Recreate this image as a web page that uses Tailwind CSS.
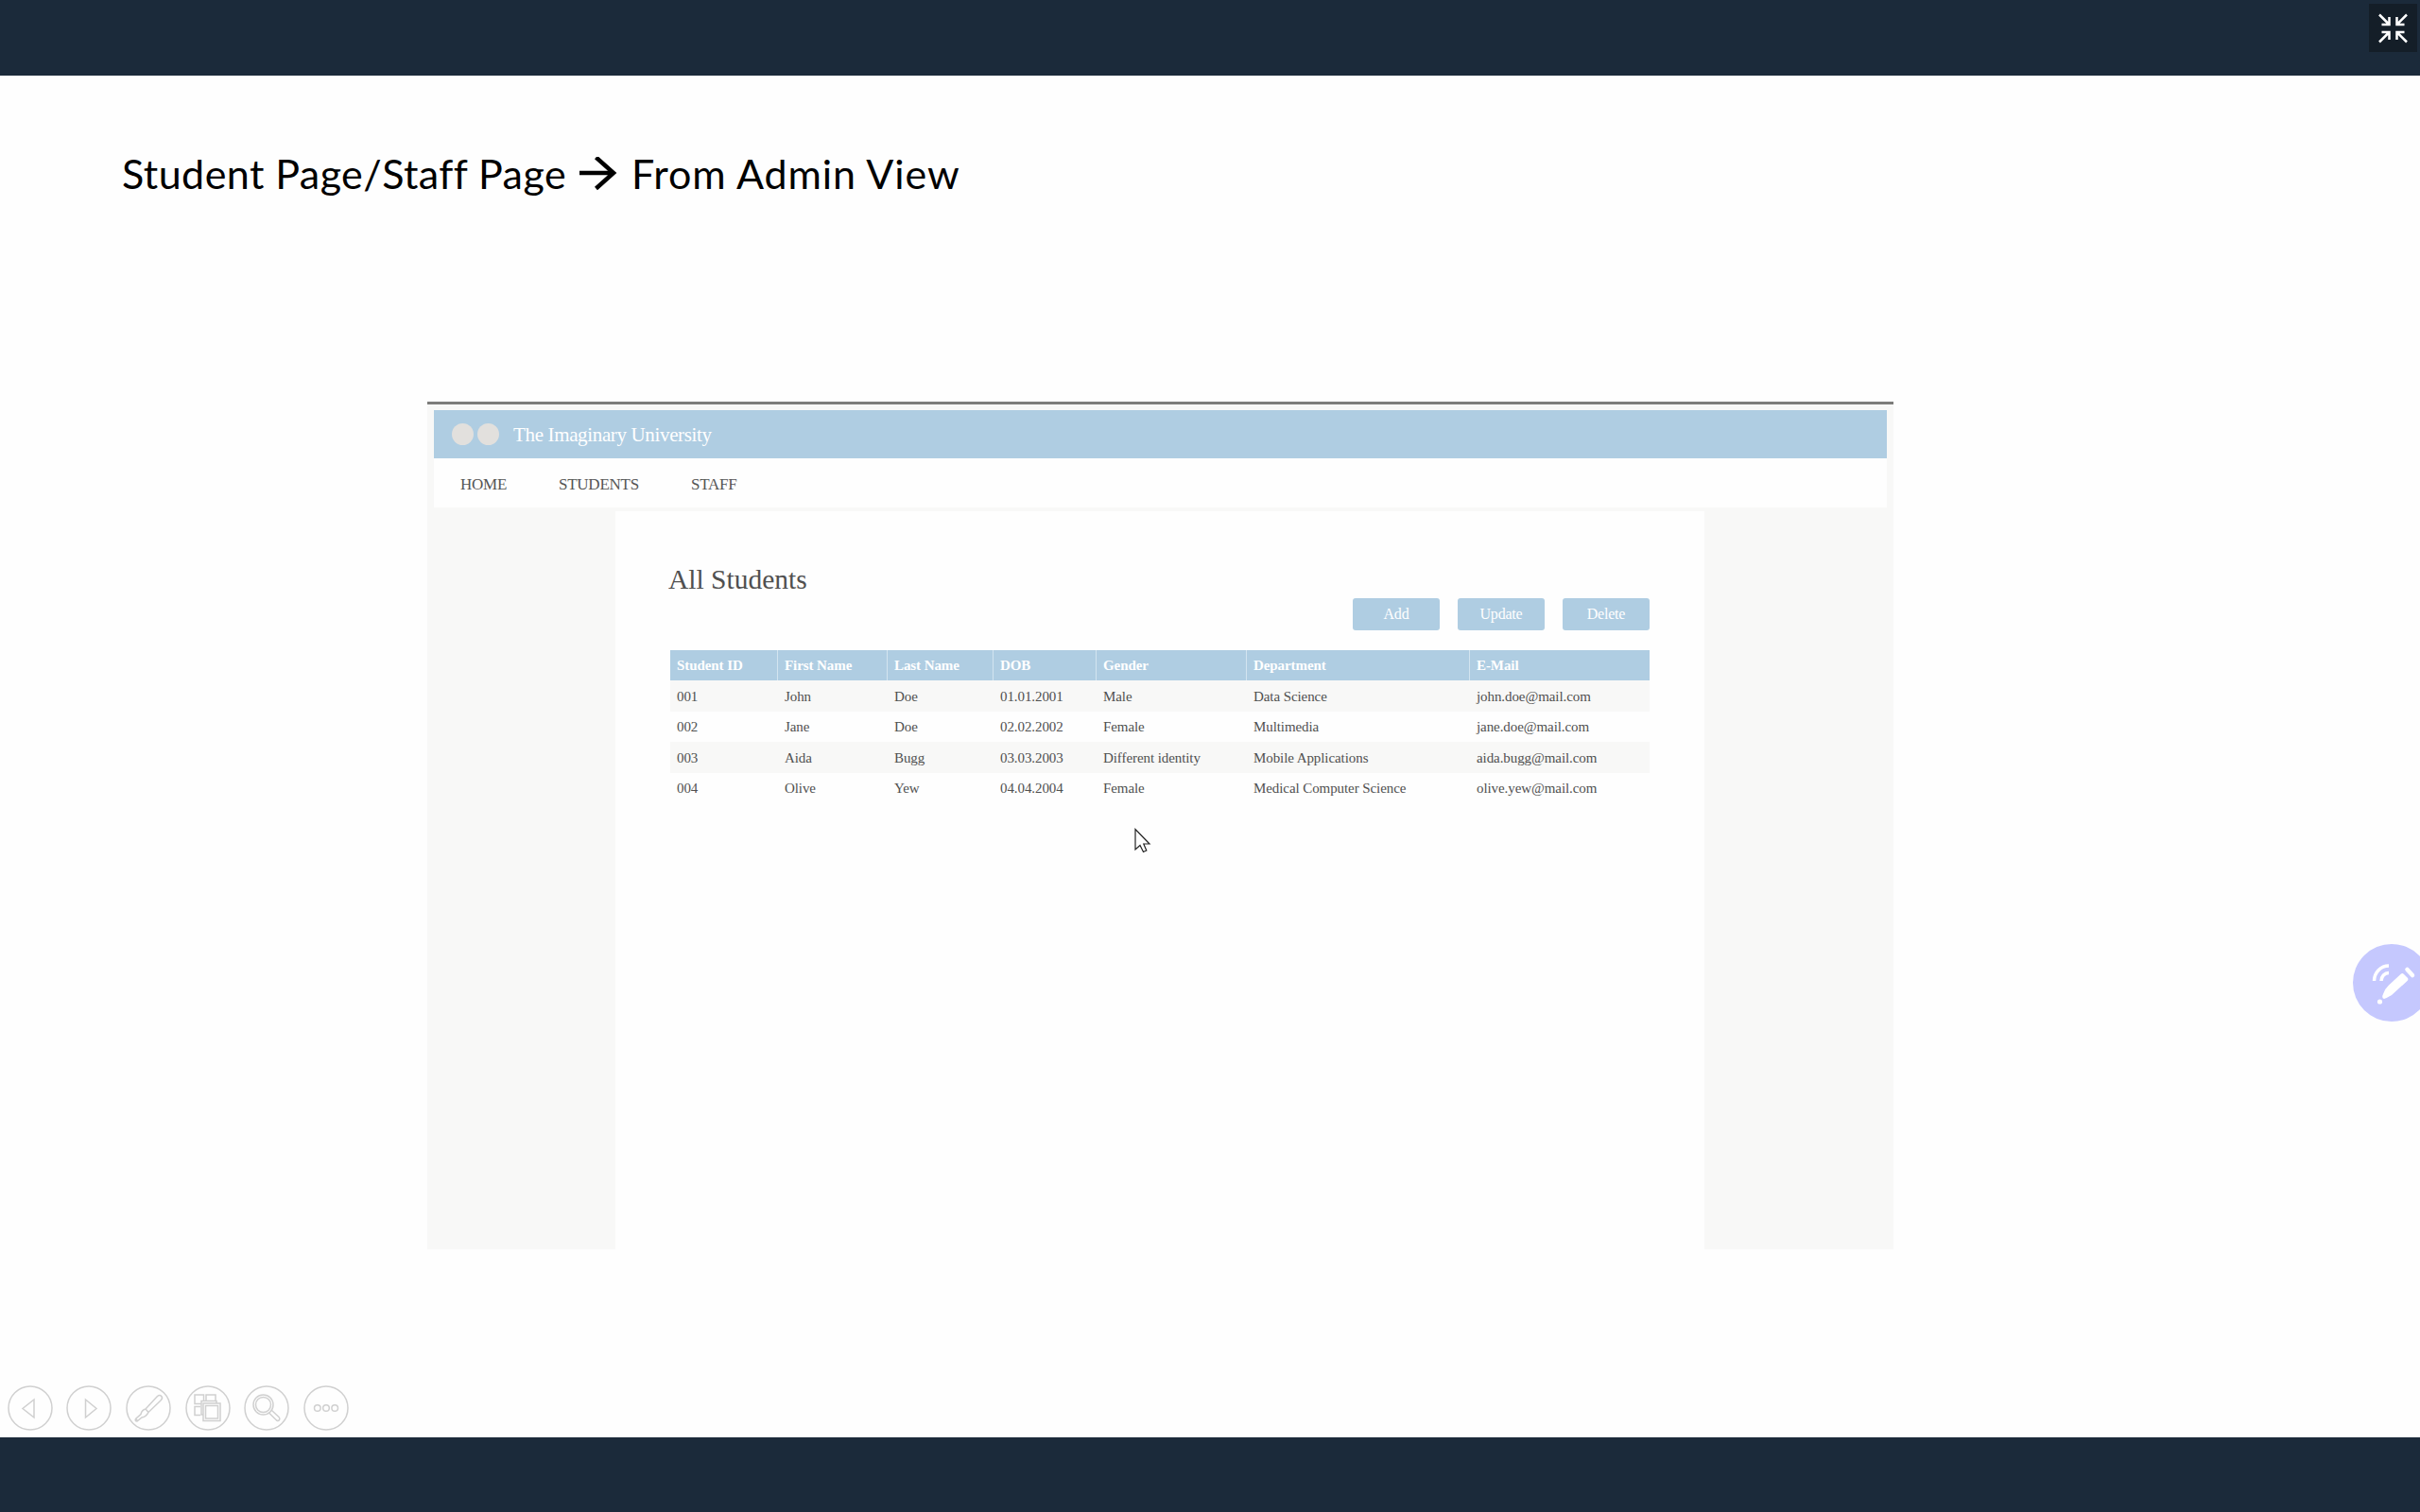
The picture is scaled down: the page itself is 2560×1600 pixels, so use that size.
<!DOCTYPE html>
<html lang="en">
<head>
<meta charset="utf-8">
<title>Student Page/Staff Page</title>
<script src="https://cdn.jsdelivr.net/npm/@tailwindcss/browser@4"></script>
</head>
<body class="relative flex h-[1600px] w-[2560px] flex-col overflow-hidden bg-[#fefefe] text-[#555]">
  <header class="flex h-20 shrink-0 justify-end bg-[#1b2a3a] pt-1 pr-[3px]">
    <button class="flex size-[51px] items-center justify-center bg-[#141e28]" aria-label="Exit full screen">
      <svg class="size-[51px]" viewBox="0 0 51 51" fill="none" stroke="#fff" stroke-width="2.5"><path d="M11 11.500L21 21.500M13.500 22H21.500V14M40 11.500L30 21.500M37.500 22H29.500V14M11 40.500L21 30.500M13.500 30H21.500V38M40 40.500L30 30.500M37.500 30H29.500V38"/></svg>
    </button>
  </header>

  <main class="flex h-[1441px] shrink-0 flex-col">
    <h1 class="flex h-[345px] items-start pt-[74px] pl-[129px] font-['Lato',sans-serif] text-[43px] leading-[60px] whitespace-nowrap text-black">
      <span class="w-[470px] tracking-[0.45px]">Student Page/Staff Page</span>
      <svg class="mt-[12px] ml-[13px] h-9 w-11" viewBox="0 0 44 36" fill="none" stroke="#000" stroke-width="4.500"><path d="M1 17H38M18.500 0.500L37 17L18.500 33.500"/></svg>
      <span class="ml-[12px] tracking-[0.9px]">From Admin View</span>
    </h1>

    <section class="ml-[452px] flex h-[897px] w-[1551px] flex-col border-t-[3px] border-[#7c7c7a] bg-[#f8f8f7] font-['Liberation_Serif',serif]">
      <div class="mx-[7px] mt-1.5 flex h-[51px] shrink-0 items-center bg-[#afcde2] pl-[19px]">
        <span class="size-[23px] rounded-full bg-[#e2e0dd]"></span>
        <span class="ml-1 size-[23px] rounded-full bg-[#e2e0dd]"></span>
        <span class="ml-[15px] text-[21px] leading-[50px] tracking-[-0.35px] text-white">The Imaginary University</span>
      </div>
      <nav class="mx-[7px] flex h-[52px] shrink-0 bg-[#fefefe] pl-7 text-[17px] leading-[56px] tracking-[-0.25px] text-[#555]">
        <a class="w-[104px]">HOME</a><a class="w-[140px]">STUDENTS</a><a>STAFF</a>
      </nav>
      <div class="mt-1 ml-[199px] flex h-[781px] w-[1152px] flex-col bg-[#fefefe] pr-[58px] pl-14">
        <h2 class="mt-[54px] text-[29.500px] leading-9 text-[#505050]">All Students</h2>
        <div class="mt-0.5 flex justify-end gap-[19px] text-base leading-[34px] tracking-[-0.2px] text-white">
          <button class="h-[34px] w-[92px] rounded-[3px] bg-[#afcde2]">Add</button>
          <button class="h-[34px] w-[92px] rounded-[3px] bg-[#afcde2]">Update</button>
          <button class="h-[34px] w-[92px] rounded-[3px] bg-[#afcde2]">Delete</button>
        </div>
        <table class="mt-[21px] ml-[2px] w-[1036px] table-fixed border-separate border-spacing-0 text-left text-[15px] leading-8 tracking-[-0.08px] text-[#505050]">
          <colgroup><col class="w-[114px]"><col class="w-[116px]"><col class="w-[112px]"><col class="w-[109px]"><col class="w-[159px]"><col class="w-[236px]"><col class="w-[190px]"></colgroup>
          <thead class="bg-[#afcde2] text-white">
            <tr class="h-8 *:border-r *:border-[#d3e4f0] *:p-0 *:pl-[7px] *:last:border-r-0"><th>Student ID</th><th>First Name</th><th>Last Name</th><th>DOB</th><th>Gender</th><th>Department</th><th>E-Mail</th></tr>
          </thead>
          <tbody>
            <tr class="h-[33px] bg-[#f8f8f7] *:p-0 *:pl-[7px]"><td>001</td><td>John</td><td>Doe</td><td>01.01.2001</td><td>Male</td><td>Data Science</td><td>john.doe@mail.com</td></tr>
            <tr class="h-8 *:p-0 *:pl-[7px]"><td>002</td><td>Jane</td><td>Doe</td><td>02.02.2002</td><td>Female</td><td>Multimedia</td><td>jane.doe@mail.com</td></tr>
            <tr class="h-[33px] bg-[#f8f8f7] *:p-0 *:pl-[7px]"><td>003</td><td>Aida</td><td>Bugg</td><td>03.03.2003</td><td>Different identity</td><td>Mobile Applications</td><td>aida.bugg@mail.com</td></tr>
            <tr class="h-8 *:p-0 *:pl-[7px]"><td>004</td><td>Olive</td><td>Yew</td><td>04.04.2004</td><td>Female</td><td>Medical Computer Science</td><td>olive.yew@mail.com</td></tr>
          </tbody>
        </table>
      </div>
    </section>

    <div class="mt-[143.500px] flex gap-[14.700px] pl-[7.500px]">
      <svg class="size-12" viewBox="0 0 48 48" fill="none" stroke="#d0d0d0" stroke-width="1.500"><circle cx="24" cy="24" r="23"/><path d="M28 15V34L16 24.500Z"/></svg>
      <svg class="size-12" viewBox="0 0 48 48" fill="none" stroke="#d0d0d0" stroke-width="1.500"><circle cx="24" cy="24" r="23"/><path d="M20.500 15V34L32 24.500Z"/></svg>
      <svg class="size-12" viewBox="0 0 48 48" fill="none" stroke="#d0d0d0" stroke-width="1.500"><circle cx="24" cy="24" r="23"/><path d="M21 25L33.500 11.500Q36 9.500 37.800 11.500T37 16L24 28.500ZM21 25L24 28.500Q22 33 17 34L12 38Q9.500 38 10.500 35.500L16 30.500Q17 26 21 25ZM10.500 35.500L13 37.500"/></svg>
      <svg class="size-12" viewBox="0 0 48 48" fill="none" stroke="#d0d0d0" stroke-width="1.500"><circle cx="24" cy="24" r="23"/><path d="M17 19.500H10V10H19.500V16.500M22 16V10H32V16M16 31.500H10V22.500H16"/><path d="M19 31H17V16.500H33V19M19 19H37V37.500H19Z"/><path d="M21.500 21.500H34.500V35H21.500Z"/></svg>
      <svg class="size-12" viewBox="0 0 48 48" fill="none" stroke="#d0d0d0" stroke-width="1.500"><circle cx="24" cy="24" r="23"/><circle cx="20.500" cy="20.500" r="10.500"/><circle cx="20.500" cy="20.500" r="8"/><path d="M26.500 29L34.500 37Q36.500 38 37.500 36.500T37 33.500L29 26"/></svg>
      <svg class="size-12" viewBox="0 0 48 48" fill="none" stroke="#d0d0d0" stroke-width="1.500"><circle cx="24" cy="24" r="23"/><circle cx="14.800" cy="24" r="3.300"/><circle cx="24" cy="24" r="3.300"/><circle cx="33.200" cy="24" r="3.300"/></svg>
    </div>
  </main>
  <footer class="h-[79px] shrink-0 bg-[#1b2a3a]"></footer>

  <svg class="absolute top-[876px] left-[1200px] h-7 w-5" viewBox="0 0 20 28" fill="#fff" stroke="#222" stroke-width="1.200"><path d="M1 1.500V23L6 18.500L9.500 25.500L12.800 24L9.800 17H16Z"/></svg>
  <button class="absolute top-[999px] left-[2489px] size-[82px] rounded-full bg-[#c5c8fe]" aria-label="Annotate">
    <svg class="size-[82px]" viewBox="0 0 82 82" fill="#fff"><path d="M51 31.500Q52.500 30.500 54 32L58 36Q59 37.500 57.500 39L41 54Q36 57 33 58Q30 57 32 53Q34 47 38 43.500Z"/><path d="M57.500 27L63 33" stroke="#fff" stroke-width="4.500" stroke-linecap="round"/><circle cx="28.500" cy="61" r="2.600"/><path d="M22.500 39A15.500 16 0 0 1 38 23M30 39A8 8.500 0 0 1 38 30.500" fill="none" stroke="#fff" stroke-width="3.500"/></svg>
  </button>
</body>
</html>
